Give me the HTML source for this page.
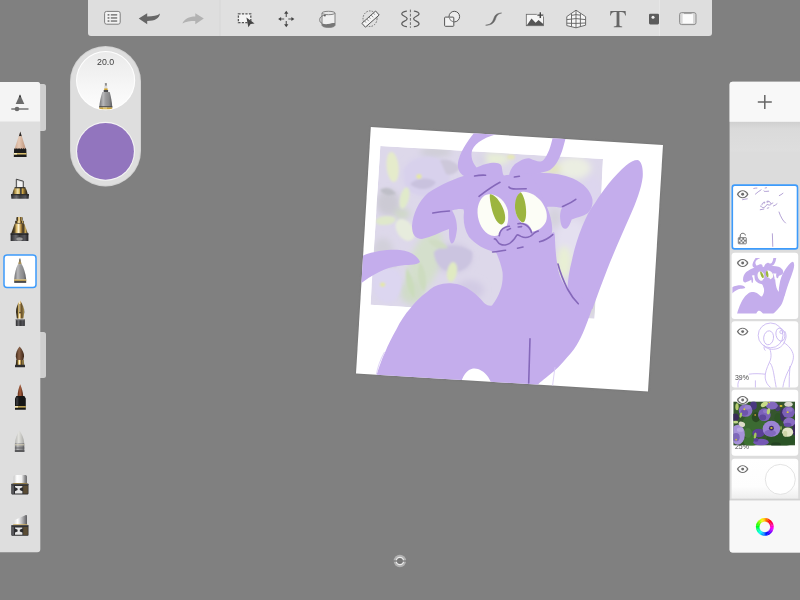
<!DOCTYPE html>
<html>
<head>
<meta charset="utf-8">
<title>Sketch</title>
<style>
html,body{margin:0;padding:0;width:800px;height:600px;overflow:hidden;background:#808080;font-family:"Liberation Sans",sans-serif;}
svg{position:absolute;left:0;top:0;display:block}
text{font-family:"Liberation Sans",sans-serif}
</style>
</head>
<body>
<svg width="800" height="600" viewBox="0 0 800 600">
<defs>
  <clipPath id="paperClip"><polygon points="370.8,127 663,145 648,391.5 356,373.5"/></clipPath>
  <clipPath id="photoClip"><polygon points="380.3,146.1 603,159 594.5,318.7 370.5,304.8"/></clipPath>
  <filter id="b3" x="-50%" y="-50%" width="200%" height="200%"><feGaussianBlur stdDeviation="3"/></filter>
  <filter id="b5" x="-50%" y="-50%" width="200%" height="200%"><feGaussianBlur stdDeviation="5"/></filter>
  <filter id="b2" x="-50%" y="-50%" width="200%" height="200%"><feGaussianBlur stdDeviation="1.3"/></filter>
  <filter id="b1" x="-20%" y="-20%" width="140%" height="140%"><feGaussianBlur stdDeviation="0.8"/></filter>
  <linearGradient id="gTopCircle" x1="0" y1="0" x2="0" y2="1"><stop offset="0" stop-color="#eaeaea"/><stop offset="0.6" stop-color="#f6f6f6"/><stop offset="1" stop-color="#fdfdfd"/></linearGradient>
  <linearGradient id="gHdrShadow" x1="0" y1="0" x2="0" y2="1"><stop offset="0" stop-color="#cfcfcf"/><stop offset="0.25" stop-color="#dadada"/><stop offset="1" stop-color="#dedede"/></linearGradient>

  <linearGradient id="gGold" x1="0" y1="0" x2="1" y2="0"><stop offset="0" stop-color="#2a2418"/><stop offset="0.18" stop-color="#4a3c20"/><stop offset="0.32" stop-color="#d8b868"/><stop offset="0.45" stop-color="#fff6d8"/><stop offset="0.58" stop-color="#b88c3c"/><stop offset="0.72" stop-color="#3c3224"/><stop offset="0.86" stop-color="#c8a858"/><stop offset="1" stop-color="#2a2418"/></linearGradient>
  <linearGradient id="gDark" x1="0" y1="0" x2="1" y2="0"><stop offset="0" stop-color="#2a2a2c"/><stop offset="0.3" stop-color="#6a6a6e"/><stop offset="0.5" stop-color="#3a3a3c"/><stop offset="0.8" stop-color="#55555a"/><stop offset="1" stop-color="#1e1e20"/></linearGradient>
  <linearGradient id="gSilver" x1="0" y1="0" x2="1" y2="0"><stop offset="0" stop-color="#6e6e70"/><stop offset="0.3" stop-color="#b8b8ba"/><stop offset="0.5" stop-color="#9a9a9c"/><stop offset="0.75" stop-color="#8a8a8c"/><stop offset="1" stop-color="#5c5c5e"/></linearGradient>
  <linearGradient id="gWood" x1="0" y1="0" x2="1" y2="0"><stop offset="0" stop-color="#c9a48c"/><stop offset="0.4" stop-color="#e6c9b4"/><stop offset="1" stop-color="#b88e76"/></linearGradient>
  <linearGradient id="gBristle" x1="0" y1="0" x2="1" y2="0"><stop offset="0" stop-color="#3e2818"/><stop offset="0.4" stop-color="#8a6248"/><stop offset="1" stop-color="#3a2416"/></linearGradient>
  <linearGradient id="gBristle2" x1="0" y1="0" x2="1" y2="0"><stop offset="0" stop-color="#5a2a16"/><stop offset="0.45" stop-color="#a86040"/><stop offset="1" stop-color="#4a2212"/></linearGradient>
  <linearGradient id="gSmudge" x1="0" y1="0" x2="1" y2="0"><stop offset="0" stop-color="#b4b4b0"/><stop offset="0.4" stop-color="#e2e2de"/><stop offset="1" stop-color="#a8a8a4"/></linearGradient>
  <linearGradient id="gEraser" x1="0" y1="0" x2="1" y2="0"><stop offset="0" stop-color="#c8c8c8"/><stop offset="0.25" stop-color="#ffffff"/><stop offset="0.6" stop-color="#f0f0f0"/><stop offset="0.85" stop-color="#8c8c8e"/><stop offset="1" stop-color="#6a6a6c"/></linearGradient>
  <linearGradient id="gEraser2" x1="0" y1="0" x2="1" y2="0"><stop offset="0" stop-color="#d8d8d8"/><stop offset="0.3" stop-color="#ffffff"/><stop offset="0.6" stop-color="#c0c0c2"/><stop offset="1" stop-color="#5a5a5e"/></linearGradient>
  <g id="eraserBase">
    <rect x="11.3" y="0" width="17.2" height="10.6" rx="0.8" fill="#2c2c2e"/>
    <rect x="11.3" y="0" width="17.2" height="1" fill="#4a4a4c"/>
    <rect x="23.2" y="1.8" width="4.6" height="8" fill="#5a4c34"/>
    <path d="M15,2.2 H22.4 V3.4 L19.8,4.6 V6.2 L22.4,7.4 V9.6 H15 V7.4 L17.6,6.2 V4.6 L15,3.4 Z" fill="#e6e6e6"/>
    <rect x="12" y="1.6" width="2" height="8.4" fill="#56565a"/>
  </g>
<g id="artFill">
    <g fill="#c4adec" stroke="none">
      <!-- tail -->
      <path d="M350,262 C366,252 385,249 400,250 C410,251 418,256 420,262 C416,266 408,264 398,266 C384,268 372,274 350,292 Z"/>
      <!-- left horn -->
      <path d="M478,128 C470,138 462,148 458.5,160 C456.5,168 459,174 466,177 L482,172 C476,168 471,162 471.5,153 C472.5,145 482,138 497,134 L498,126 Z"/>
      <!-- right horn -->
      <path d="M553,136 C551,146 548,155 543.5,160 C540,163 536,161 530,158.5 C526,157.5 521,160 515,164 C511,168 509.5,172 509,176 L525,176 C534,174.5 544,172.5 550,170 C556,166 560,158 563,148 L566,137 Z"/>
      <!-- head -->
      <path d="M466,176 C472,170 478,166 486,164 C493,162 500,162 501.5,166 C502.5,170 502.5,175 504,175.5 C515,174 535,173 551,174 C548,184 546,196 546.6,206 C550,214 553,224 552,232 C550,240 548,244 548,246 L495,252 C485,250 475,244 469,237 C464,229 463,220 464,212 C462,200 462,186 466,176 Z"/>
      <!-- left ear -->
      <path d="M470,174 C455,178 440,185 428,193 C418,202 413,214 412,226 C412,234 415,239 422,239 C432,237 440,232 449,229 C449,235 449,241 451.5,243.5 C454,244 456,238 457,229 C457,221 455,215 452,210.5 C458,208.5 462,208.5 466,210 L470,190 Z"/>
      <!-- right ear -->
      <path d="M530,173.5 C546,172 561,173.5 573,178.5 C584,183.5 591,191 592.5,199.6 C593,205 591.5,209 588,213 C583,216.5 577,217.5 571.7,219.4 C570,224 568.5,228 565.5,228.7 C561.5,229 560.3,223 560,216 C560.3,212 561,209.5 562,208 C557,207 552,206.5 546,207 L540,190 Z"/>
      <!-- raised arm -->
      <path d="M637.6,160 C641.5,161 643.3,168 642.7,177 C641.5,188 636,203 630,216 C623,232 614,252 607,270 C602,283 597,296 592.5,309 L575,310 C571,302 568,296 567.5,289 C567.8,279 569.5,270 572,260 C574,250 577.5,238 582,227 C586,217 590,209 595,203 C603,190 614,176 626,165.5 C630,162 634,160 637.6,160 Z"/>
      <!-- body -->
      <path d="M494,248 C498,256 501,264 502.5,272 C503.5,282 501,294 492,305.5 C487,306.5 484,303 480.6,299 C474,292 466,286 457,284 C451,283 447,283 443,283.8 C436,285 431,288 427,292 C420,297 415,302 410.6,308 C405,314 400,322 396.6,329 C392,337 388,345 385,352.6 C381,361 378,370 374,384 L462,392 L462,379.4 C464,375 466,372 469,370 C471,368.5 475,368 478,369 C483,371 488,374 492,385 L530,394 C537,384 542,381 548,376 C555,370.5 562,364 567,357.5 C572,352 576,347 579,341 C584,332 588,320 592.5,307.5 L580,296 C574,294 570,292 567.5,289 C563,284 560,278 558.5,271 C556.5,262 555.3,250 555,240 C555,237 555,234 554,232 L546,236 Z"/>
    </g>

    <!-- eyes -->
    <g>
      <path d="M488.5,194.2 C483,194.5 478.5,201 477.6,209 C476.8,219 481,229.5 488,234 C493,237 498.5,236.5 502.5,232 C507.5,227 509.5,219 508,211 C506,201 497,193.5 488.5,194.2 Z" fill="#fcfdf6"/>
      <path d="M490,194.3 C493,194 498,198 502,206 C506,214 506.5,222 502,224.5 C498.5,225 494.5,219 492.3,211 C490.3,203.5 489.3,196 490,194.3 Z" fill="#9cb53f"/>
      <path d="M521,192 C527,190.5 535,194 541,201 C546.5,208 548,216 546,221.5 C543.5,227 538,231 532,231.5 C526,228 519,222 516.2,214 C514,206 516,195 521,192 Z" fill="#fcfdf6"/>
      <path d="M520.8,192.3 C523.5,195 525.5,202 526,209 C526.5,216 525.5,222 523,222.5 C519,221.5 515.5,215 515,208 C514.6,201 517,194 520.8,192.3 Z" fill="#9cb53f"/>
    </g>
    <!-- nose bumps (purple over eye whites) -->
    <g fill="#c4adec">
      <path d="M499,237 C499.5,231 502.5,227 507.5,226.5 C512,226.3 515,230 516,236 L510,244 Z"/>
      <path d="M516.5,233 C517,227 519,223.5 523.5,223 C528,223 531,227 532.5,233 L522,240 Z"/>
      <path d="M506,196 C510,200 514,207 516,216 C517,222 517.5,226 517,230 L508,228 C509,218 508.5,208 506,196 Z"/>
    </g>
    </g>
<g id="artLines">
    <!-- dark line work -->
    <g fill="none" stroke="#8568ba" stroke-linecap="round" stroke-linejoin="round">
      <path d="M474.6,176 C478,175.3 482,175 485.6,175.2"/>
      <path d="M514.4,177 L519.4,176.2"/>
      <path d="M479,196.3 C486,191 493,186 500,182.3"/>
      <path d="M509,187 C510,188.8 513,189 516,189 L526.2,188.8"/>
      <path d="M432.8,213 C438,212 444,211.3 449.5,211"/>
      <path d="M562.5,206.5 C566,205 571,203 575.8,199.3"/>
      <path d="M499.25,235.6 C499.6,232 502,228.8 505.3,227.3 C506.8,226.7 508.2,226.3 509.4,226.3"/>
      <path d="M518,223.7 C520.5,223 523,223.4 525.5,224.8 C528.5,226.6 530.8,229.5 531.5,232.6"/>
      <path d="M494.4,239 C495.3,238.6 496.2,239.6 497,240.9 C498,242.6 499,243.6 500.5,244.2 C502,245 503.6,245.2 505.25,245 C507,244.7 509,244 510.5,242.75 C512,241.5 513.2,240.3 514.25,239 C515.2,237.8 515.8,236.4 516.5,235.6 C517,235 517.5,234.8 518,234.9 C519,235.2 520,235.9 521,236.4 C522.5,237.1 524,237.5 525.5,237.5 C527,237.5 528.6,237.1 530,236.4 C531.4,235.6 532.6,234.4 533.75,233.4 C535,232.4 536.5,231.7 538.25,231.1"/>
      <path d="M507.2,230 L510.4,228.6"/>
      <path d="M518.2,227 L521.6,226.6"/>
      <path d="M492.6,252 C497,251.6 501,250.8 505.6,250.2"/>
      <path d="M517.5,248.2 L523,247"/>
      <path d="M539.6,241.8 C544,240.6 549,238 552.8,234.6"/>
      <path d="M558,264 C560,272 563,280 567.5,289 C570.5,294.5 574,299.5 578.3,303.8"/>
      <path d="M530,338.7 L528.7,383"/>
    </g>
    </g>

  <g id="eye">
    <path d="M-5.8,0 C-3.4,-5.3 3.4,-5.3 5.8,0 C3.4,5.3 -3.4,5.3 -5.8,0 Z" fill="#6c6c6c"/>
    <path d="M-4.3,0 C-2.6,-3.7 2.6,-3.7 4.3,0 C2.6,3.7 -2.6,3.7 -4.3,0 Z" fill="#fbfbfb"/>
    <circle cx="0" cy="0" r="2.95" fill="#fbfbfb"/>
    <circle cx="0" cy="0" r="1.45" fill="#6c6c6c"/>
  </g>
  <clipPath id="thumbClip"><rect x="0" y="0" width="292.8" height="247"/></clipPath>
<linearGradient id="gL5" x1="0" y1="0" x2="0" y2="1"><stop offset="0" stop-color="#ffffff"/><stop offset="0.7" stop-color="#fdfdfd"/><stop offset="1" stop-color="#eeeeee"/></linearGradient>
<clipPath id="l1clip"><rect x="733" y="185.8" width="63.8" height="62.4"/></clipPath>
<filter id="bT" x="-30%" y="-30%" width="160%" height="160%"><feGaussianBlur stdDeviation="0.7"/></filter>
<linearGradient id="gGold2" x1="0" y1="0" x2="1" y2="0"><stop offset="0" stop-color="#1c1c1c"/><stop offset="0.18" stop-color="#b89848"/><stop offset="0.36" stop-color="#f4e6b0"/><stop offset="0.48" stop-color="#c8a850"/><stop offset="0.55" stop-color="#1e2638"/><stop offset="0.66" stop-color="#d0a848"/><stop offset="0.82" stop-color="#6a5428"/><stop offset="1" stop-color="#1a1a1a"/></linearGradient>
</defs>

<!-- ===== PAPER ===== -->
<g id="paper">
  <polygon points="370.8,127 663,145 648,391.5 356,373.5" fill="#6f6f6f" filter="url(#b1)"/>
  <polygon points="370.8,127 663,145 648,391.5 356,373.5" fill="#ffffff"/>
  <g id="photo" clip-path="url(#photoClip)">
    <polygon points="380.3,146.1 603,159 594.5,318.7 370.5,304.8" fill="#ddd8ea"/>
    <g filter="url(#b3)">
      <ellipse cx="388" cy="203" rx="12" ry="13" fill="#cccad4"/>
      <ellipse cx="383" cy="250" rx="10" ry="12" fill="#d2d0da"/>
      <ellipse cx="436" cy="152" rx="16" ry="5" fill="#cfced6"/>
      <ellipse cx="426" cy="176" rx="24" ry="20" fill="#d9d3ec"/>
      <ellipse cx="387" cy="284" rx="15" ry="18" fill="#dbd5ee"/>
      <ellipse cx="452" cy="258" rx="20" ry="14" fill="#cfc8e2"/>
      <ellipse cx="470" cy="290" rx="14" ry="10" fill="#d2cbe4"/>
      <ellipse cx="425" cy="262" rx="15" ry="34" fill="#d4dfcc" transform="rotate(20 425 262)"/>
      <ellipse cx="412" cy="292" rx="12" ry="12" fill="#d0dcc8"/>
      <ellipse cx="402" cy="214" rx="8" ry="6" fill="#cfd8c8"/>
      <ellipse cx="494" cy="159" rx="16" ry="6" fill="#e8efd6"/>
      <ellipse cx="482" cy="160" rx="5" ry="5" fill="#d8d3e6"/>
      <ellipse cx="574" cy="168" rx="17" ry="11" fill="#ebeee2"/>
      <ellipse cx="553" cy="169" rx="8" ry="5" fill="#e4e6bc"/>
      <ellipse cx="593" cy="190" rx="10" ry="14" fill="#ddd6ee"/>
      <ellipse cx="572" cy="240" rx="16" ry="20" fill="#e4e0f0"/>
      <ellipse cx="564" cy="262" rx="8" ry="16" fill="#e8efd4"/>
      <ellipse cx="588" cy="300" rx="8" ry="16" fill="#d6d8d2"/>
      <ellipse cx="555" cy="218" rx="6" ry="10" fill="#d4d2dc"/>
    </g>
    <g filter="url(#b2)">
      <path d="M404,170 C410,158 428,154 440,160 C450,166 452,180 446,190 C436,198 416,198 406,188 Z" fill="#d8d1ec"/>
      <path d="M410,184 C416,178 428,176 436,182 C432,190 418,192 410,184 Z" fill="#c9c2de"/>
      <path d="M440,160 C448,158 456,162 460,168 C456,174 450,176 446,174 Z" fill="#cdc8da"/>
      <path d="M374,272 C380,264 394,266 400,276 C404,288 398,300 388,303 C378,302 372,290 374,272 Z" fill="#dcd6f0"/>
      <path d="M376,262 C384,258 394,260 398,266 C390,268 382,268 376,262 Z" fill="#cac6d6"/>
      <path d="M434,252 C442,244 462,244 472,252 C474,262 466,272 452,272 C440,270 434,262 434,252 Z" fill="#cbc4e0"/>
      <ellipse cx="392.6" cy="167" rx="6" ry="15" fill="#e5ebcb" transform="rotate(-6 392.6 167)"/>
      <ellipse cx="404.5" cy="198" rx="4.5" ry="11" fill="#e0eaca" transform="rotate(14 404.5 198)"/>
      <ellipse cx="385.5" cy="220.5" rx="10" ry="4.5" fill="#dfe8cb" transform="rotate(-6 385.5 220.5)"/>
      <ellipse cx="405" cy="230" rx="8" ry="12" fill="#e7ecdd" transform="rotate(-35 405 230)"/>
      <ellipse cx="452" cy="272" rx="5" ry="10" fill="#e0eac2" transform="rotate(10 452 272)"/>
      <ellipse cx="511" cy="157" rx="4" ry="2.5" fill="#e6e8b8"/>
      <path d="M407,268 C412,276 416,288 414,298 C408,292 404,280 407,268 Z" fill="#cbdcbc"/>
      <path d="M420,262 C426,270 428,282 424,292 C418,284 416,272 420,262 Z" fill="#cddcc0"/>
      <path d="M428,240 C436,238 444,242 448,248 C440,250 432,248 428,240 Z" fill="#d0dcc4"/>
      <path d="M380,190 C386,186 392,188 396,194 C390,196 384,196 380,190 Z" fill="#bfbfc8"/>
    </g>
    <ellipse cx="419" cy="176.5" rx="2.6" ry="2.2" fill="#e6ea9c" filter="url(#b1)"/>
    <ellipse cx="382.6" cy="284.6" rx="2.6" ry="2.2" fill="#e4e8a4" filter="url(#b1)"/>
  </g>
  <g id="art" clip-path="url(#paperClip)">
    <use href="#artFill"/>
    <g stroke-width="1.6"><use href="#artLines"/></g>
    <!-- faint sketch lines -->
    <g fill="none" stroke="#d6c8f4" stroke-width="0.8">
      <path d="M384.5,352 C380,360 377.5,368 376.5,374"/>
      <path d="M555,367 L552.5,386"/>
    </g>
<!--ART3-->
  </g>
</g>

<!-- ===== TOP TOOLBAR ===== -->
<g id="toolbar">
  <path d="M88,0 H712 V33 a3,3 0 0 1 -3,3 H91 a3,3 0 0 1 -3,-3 Z" fill="#dedede"/>
  
  <rect x="220" y="0" width="439" height="36" fill="#e0e0e0"/>
  <rect x="219.5" y="0" width="1" height="36" fill="#d6d6d6"/>
  <rect x="659" y="0" width="1" height="36" fill="#e6e6e6"/>
  <!-- list -->
  <rect x="104.6" y="11.4" width="15.6" height="12.8" rx="2" fill="#f2f2f2" stroke="#7d7d7d" stroke-width="1"/>
  <g fill="#7a7a7a">
    <rect x="107.6" y="14" width="1.8" height="1.7"/><rect x="110.8" y="14.1" width="6.4" height="1.5"/>
    <rect x="107.6" y="17.1" width="1.8" height="1.7"/><rect x="110.8" y="17.2" width="6.4" height="1.5"/>
    <rect x="107.6" y="20.2" width="1.8" height="1.7"/><rect x="110.8" y="20.3" width="6.4" height="1.5"/>
  </g>
  <!-- undo / redo -->
  <path d="M138.7,18.6 L147.2,13.2 L147.2,16.4 C153,16.4 157.5,15.6 160,13.4 C159.3,18.2 155,20.9 147.2,20.9 L147.2,24.3 Z" fill="#666"/>
  <path d="M203.8,18.6 L195.3,13.2 L195.3,16.4 C189,16.4 184.5,18.6 182.4,23.4 C186,21.4 190,20.9 195.3,20.9 L195.3,24.3 Z" fill="#b2b2b2"/>
  <!-- select -->
  <rect x="238.4" y="13.9" width="12.4" height="8.8" fill="#f4f4f4" stroke="#555" stroke-width="1.3" stroke-dasharray="2.2,1.3"/>
  <path d="M246.4,17.4 L254.6,23.4 L250.6,24 L248.4,27.2 Z" fill="#444"/>
  <!-- move -->
  <g stroke="#555" stroke-width="1.1" fill="none">
    <path d="M286.25,12.5 V17 M286.25,21 V25.5 M279.8,19 H284.2 M288.3,19 H292.8"/>
  </g>
  <g fill="#444">
    <path d="M286.25,10.8 L288.4,13.8 H284.1 Z"/><path d="M286.25,27.2 L288.4,24.2 H284.1 Z"/>
    <path d="M278.1,19 L281.1,16.9 V21.1 Z"/><path d="M294.4,19 L291.4,16.9 V21.1 Z"/>
  </g>
  <!-- bucket -->
  <g>
    <path d="M322,13 V25 C322,26.6 325,27.4 328.5,27.4 C332,27.4 335,26.6 335,25 V13 Z" fill="#efefef" stroke="#777" stroke-width="0.9"/>
    <path d="M322,23.6 C324,24 326,24.4 328,24 C331,23.4 333,22.8 335,23 V25 C335,26.6 332,27.4 328.5,27.4 C325,27.4 322,26.6 322,25 Z" fill="#777"/>
    <ellipse cx="328.5" cy="13" rx="6.5" ry="1.7" fill="#e6e6e6" stroke="#777" stroke-width="0.9"/>
    <path d="M324.6,15.4 C321,15.6 319.4,18 319.8,20.6 C320,22.2 321,23 322,23.2" fill="none" stroke="#666" stroke-width="0.9"/>
    <circle cx="324.9" cy="15.6" r="0.9" fill="#555"/>
  </g>
  <!-- ruler -->
  <g>
    <ellipse cx="370" cy="18.7" rx="7" ry="7.8" fill="none" stroke="#666" stroke-width="0.9" stroke-dasharray="1.6,1.2"/>
    <path d="M361.9,23.3 L375.6,11 L379.2,15 L365.4,27.2 Z" fill="#f4f4f4" stroke="#555" stroke-width="1" stroke-linejoin="round"/>
    <path d="M364.6,21 L366,22.6 M366.8,19 L368.8,21.2 M369,17.1 L370.4,18.7 M371.2,15.1 L373.2,17.3 M373.4,13.1 L374.8,14.7" stroke="#666" stroke-width="0.7" fill="none"/>
  </g>
  <!-- symmetry -->
  <g fill="none" stroke="#5e5e5e">
    <path d="M410.4,9.6 V27.8" stroke-width="0.9" stroke-dasharray="2.7,1.5"/>
    <path d="M406.4,11.2 C403.5,11.6 401.5,12.6 401.8,14.2 C402.2,16.2 407,16.4 407.2,18.7 C407,21 402.2,21.2 401.8,23.4 C401.5,25 403.5,26.2 406.4,26.6" stroke-width="1.3" stroke-linecap="round"/>
    <path d="M414.4,11.2 C417.3,11.6 419.3,12.6 419,14.2 C418.6,16.2 413.8,16.4 413.6,18.7 C413.8,21 418.6,21.2 419,23.4 C419.3,25 417.3,26.2 414.4,26.6" stroke-width="1.3" stroke-linecap="round"/>
  </g>
  <!-- shapes -->
  <g stroke="#555" stroke-width="1">
    <circle cx="454.3" cy="16.6" r="5.3" fill="#ececec"/>
    <rect x="444.6" y="17.1" width="9.2" height="9.2" rx="0.8" fill="#f2f2f2"/>
    <path d="M449.2,17.6 A5.3,5.3 0 0 0 453.3,21.8" fill="none" stroke-width="0.7"/>
  </g>
  <!-- curve -->
  <path d="M485.6,25.2 C492,24.6 493,20.5 494,18 C495,15.2 496.5,13.2 501.6,13 C497.6,14 496.6,16 495.6,18.8 C494.4,22 492.6,25.4 485.6,25.2 Z" fill="#666" stroke="#666" stroke-width="0.5" stroke-linejoin="round"/>
  <!-- image + -->
  <g>
    <rect x="526.3" y="14.3" width="17.2" height="11.4" fill="#f6f6f6" stroke="#666" stroke-width="0.8"/>
    <path d="M526.7,25.4 L531.5,18.6 L535.6,22.8 L538.6,20 L543.2,24 V25.4 Z" fill="#555"/>
    <rect x="536" y="11" width="9" height="9" fill="#e0e0e0" opacity="0.0"/>
    <path d="M540.3,11.6 V18.6 M536.8,15.1 H543.8" stroke="#e8e8e8" stroke-width="3" fill="none"/>
    <path d="M540.3,12.2 V18 M537.4,15.1 H543.2" stroke="#444" stroke-width="1.4" fill="none"/>
  </g>
  <!-- perspective grid -->
  <g fill="#f6f6f6" stroke="#666" stroke-width="0.95" stroke-linejoin="round">
    <path d="M576,10.2 L585.6,16.6 V25.2 L576,27.8 L566.8,25.6 V16.6 Z"/>
    <path d="M576,10.2 V27.8 M571.5,13.4 V26.8 M580.4,13.2 V26.6 M566.8,19.6 L576,18.6 L585.6,19.6 M566.8,23.2 L576,23.4 L585.6,23 M571.5,15.4 L576,14.6 L580.4,15.2" fill="none"/>
  </g>
  <!-- T -->
  <path d="M610.4,10.9 H625.6 L625.9,15.5 H625.2 C624.8,13 623.6,12 621,12 H619.4 V24.6 C619.4,26 620,26.5 622.2,26.6 V27.3 H613.8 V26.6 C616,26.5 616.6,26 616.6,24.6 V12 H615 C612.4,12 611.2,13 610.8,15.5 H610.1 Z" fill="#666"/>
  <!-- small dark tag -->
  <rect x="649" y="13.8" width="10" height="10.6" rx="1.3" fill="#5c5c5c"/>
  <circle cx="653" cy="17.2" r="1.5" fill="#f0f0f0"/>
  <!-- full screen -->
  <rect x="679.6" y="12.6" width="16.4" height="12" rx="2" fill="#d8d8d8" stroke="#858585" stroke-width="0.9"/>
  <rect x="682.6" y="14.2" width="10.4" height="9.2" fill="#fbfbfb"/>
  <rect x="684" y="13.2" width="7.6" height="0.8" fill="#9a9a9a"/>

</g>

<!-- ===== LEFT PANEL ===== -->
<g id="leftpanel">
  
  <rect x="40" y="84" width="6" height="47" rx="2.5" fill="#cfcfcf"/>
  <rect x="37" y="84" width="6" height="47" fill="#cfcfcf"/>
  <rect x="40" y="332" width="6" height="46" rx="2.5" fill="#cfcfcf"/>
  <rect x="37" y="332" width="6" height="46" fill="#cfcfcf"/>
  <path d="M0,82 H37.3 a3,3 0 0 1 3,3 V549.3 a3,3 0 0 1 -3,3 H0 Z" fill="#dedede"/>
  <path d="M0,82 H37 a3,3 0 0 1 3,3 V121.5 H0 Z" fill="#f4f4f4"/>
  <!-- brush-size icon -->
  <path d="M20,94.6 L24.3,104 H15.7 Z" fill="#6b6b6b"/>
  <path d="M20,94.6 L21.2,97.2 H18.8 Z" fill="#333"/>
  <rect x="11.3" y="108.3" width="17.2" height="1.4" fill="#6b6b6b"/>
  <circle cx="17" cy="109" r="2.3" fill="#6b6b6b"/>
  <!-- selected brush box -->
  <rect x="4" y="255" width="32" height="32.5" rx="3" fill="#ffffff" stroke="#3d9bfb" stroke-width="1.5"/>
  
  <!-- pencil -->
  <g>
    <path d="M20.3,131.6 L26.2,150 H14.2 Z" fill="url(#gWood)"/>
    <path d="M20.3,131.4 L21.8,136.4 C21,135.8 19.6,135.8 18.8,136.4 Z" fill="#2a2a2a"/>
    <path d="M14.1,149.2 C14.6,148 15.4,148 15.9,149.2 C16.4,148 17.4,148 17.9,149.2 C18.4,147.8 19.6,147.8 20.2,149.2 C20.8,147.8 22,147.8 22.5,149.2 C23,148 24,148 24.5,149.2 C25,148 25.8,148 26.3,149.2 L26.6,157 H13.8 Z" fill="#1c1c1c"/>
    <rect x="13.9" y="153" width="12.6" height="1.5" fill="#d9bf6e"/>
    <rect x="13.9" y="153" width="3" height="1.5" fill="#f6ecc0"/>
  </g>
  <!-- chisel marker / airbrush -->
  <g>
    <path d="M16.3,179.2 L23.3,181.2 V188 H16.3 Z" fill="#d8d8d8" stroke="#333" stroke-width="0.9" stroke-linejoin="round"/>
    <path d="M17.4,181 L22.2,182.2 V187 H17.4 Z" fill="#f2f2f2"/>
    <path d="M15,187.4 H25 C26.6,189.4 27.4,192 27.6,194.4 H12.4 C12.6,192 13.4,189.4 15,187.4 Z" fill="url(#gGold2)"/><rect x="14.6" y="187.2" width="10.8" height="1.1" fill="#2a2a2a"/>
    <path d="M11,194.2 H29 L28.6,198.8 H11.4 Z" fill="url(#gDark)"/>
    <rect x="11" y="194.2" width="18" height="1" fill="#222"/>
  </g>
  <!-- felt marker -->
  <g>
    <rect x="16.4" y="217" width="6.2" height="4" rx="0.8" fill="url(#gGold)"/>
    <rect x="15.2" y="220.8" width="8.6" height="2.6" fill="url(#gGold)"/>
    <rect x="15.2" y="223.2" width="8.6" height="0.7" fill="#3a2c14"/>
    <path d="M14.6,223.8 H24.4 L27.8,233.6 H11.2 Z" fill="url(#gGold)"/>
    <path d="M10.6,233.4 H28.4 V241 H10.6 Z" fill="url(#gDark)"/>
    <rect x="10.6" y="233.4" width="17.8" height="1.2" fill="#1c1c1c"/>
    <ellipse cx="19.5" cy="239" rx="3.2" ry="1.8" fill="#9a9a9a"/>
  </g>
  <!-- ballpoint (selected) -->
  <g>
    <path d="M19.3,260 H20.5 L21.6,264.4 H18.2 Z" fill="#8a7a58"/><rect x="18.6" y="262.6" width="2.6" height="0.9" fill="#c8a858"/>
    <rect x="19.3" y="258.6" width="1.2" height="2" fill="#555"/>
    <path d="M18,264.2 H21.8 C23.8,268 25.6,273 26.2,279.6 H14.2 C14.6,273 16,268 18,264.2 Z" fill="url(#gSilver)"/>
    <rect x="14" y="279.4" width="12.4" height="1.6" fill="#c8a858"/>
    <rect x="14.2" y="280.9" width="12" height="2" fill="#4a4a4c"/>
  </g>
  <!-- fountain pen -->
  <g>
    <path d="M20,300.4 C22.6,304 24.4,308 24.3,312 L23.4,318.4 H16.8 L16,312 C15.9,308 17.4,304 20,300.4 Z" fill="url(#gGold)"/>
    <path d="M20,304 V312.6" stroke="#3a2c14" stroke-width="0.7"/>
    <circle cx="20" cy="312.8" r="0.8" fill="#2a2010"/>
    <rect x="15.8" y="319" width="9" height="7" rx="0.6" fill="url(#gDark)"/>
    <rect x="15.8" y="319" width="9" height="1.2" fill="#8a8a8c"/>
  </g>
  <!-- round brush -->
  <g>
    <path d="M19.6,346.6 C22.6,350 24.4,353.6 24,356.6 L23.2,360.4 H16.6 L15.8,356.6 C15.6,353.6 16.8,350 19.6,346.6 Z" fill="url(#gBristle)"/>
    <path d="M16.2,360 H23.8 L24.2,365.2 H15.8 Z" fill="url(#gGold)"/>
    <rect x="15" y="364.8" width="10" height="2.4" rx="0.5" fill="#2c2c2e"/>
  </g>
  <!-- pointed brush -->
  <g>
    <path d="M20.2,384.2 C21.8,388 23,392 23.2,396.4 H17.6 C17.6,392 18.6,388 20.2,384.2 Z" fill="url(#gBristle2)"/>
    <path d="M16.4,396 H24.4 L25.8,398.6 V409.8 H15 V398.6 Z" fill="#161616"/>
    <rect x="16" y="397.4" width="2.4" height="8" fill="#3c3c40" opacity="0.8"/>
    <rect x="15" y="406.2" width="10.8" height="1.3" fill="#e0c060"/>
    <rect x="15" y="406.2" width="3" height="1.3" fill="#fff0c0"/>
  </g>
  <!-- smudge -->
  <g>
    <path d="M19.5,430.4 C22,434 24,438.6 24.3,443.4 H14.9 C15.2,438.6 17,434 19.5,430.4 Z" fill="url(#gSmudge)"/>
    <rect x="14.9" y="443.2" width="9.4" height="8.8" rx="0.6" fill="url(#gSilver)"/>
    <rect x="14.9" y="444.4" width="9.4" height="0.9" fill="#e8e0c4"/>
    <rect x="14.9" y="447.6" width="9.4" height="0.8" fill="#58585a"/>
    <rect x="14.9" y="450" width="9.4" height="2" fill="#5a5a5c"/>
  </g>
  <!-- eraser 1 -->
  <g>
    <path d="M13.6,476.8 C13.6,475.6 14.4,475.1 15.6,475.1 H25 C26.2,475.1 27,475.6 27,476.8 V483.2 H13.6 Z" fill="url(#gEraser)"/>
    <rect x="13.2" y="483" width="14.2" height="0.9" fill="#c8a040"/>
    <use href="#eraserBase" y="483.8"/>
  </g>
  <!-- eraser 2 (chisel) -->
  <g>
    <path d="M13.6,520.6 L25.4,515.2 C26.4,514.9 27,515.4 27,516.4 V524.6 H13.6 Z" fill="url(#gEraser2)"/>
    <rect x="13.2" y="524.4" width="14.2" height="0.9" fill="#c8a040"/>
    <use href="#eraserBase" y="525.2"/>
  </g>


</g>

<!-- ===== BRUSH PUCK ===== -->
<g id="puck">
  
  <rect x="70" y="46" width="71" height="140.5" rx="35.5" fill="#d2d2d2"/>
  <rect x="71" y="47" width="69" height="138.5" rx="34.5" fill="#dedede"/>
  <circle cx="105.6" cy="80.6" r="29.6" fill="#ffffff"/>
  <circle cx="105.6" cy="80.6" r="28.6" fill="url(#gTopCircle)"/>
  <circle cx="105.5" cy="151.3" r="29.5" fill="#f4f4f4"/>
  <circle cx="105.5" cy="151.3" r="28.4" fill="#9275be"/>
  <text opacity="0.99" x="105.6" y="65" font-size="8.8" text-anchor="middle" fill="#3c3c3c">20.0</text>
  
  <g>
    <rect x="104.9" y="83" width="2" height="5" rx="0.6" fill="#8c8c8c"/>
    <rect x="104.6" y="85.6" width="2.6" height="2.8" fill="#d8d8d8"/>
    <rect x="104.2" y="88.4" width="3.4" height="1.7" fill="#c8a030"/>
    <rect x="103.7" y="90" width="4.4" height="2.2" fill="#4c4c4e"/>
    <path d="M102.3,92 H109.7 C111,97 112,102 112.3,107.4 H99.2 C99.6,102 100.8,97 102.3,92 Z" fill="url(#gSilver)"/>
    <rect x="99.2" y="106.2" width="13.1" height="1.2" fill="#4a4a4c"/>
    <path d="M99.2,107.4 H112.3 L112.2,108.7 C108,109.5 103.4,109.5 99.3,108.7 Z" fill="#c9a23a"/>
    <rect x="103" y="107.6" width="4" height="0.9" fill="#f2e2a0"/>
  </g>


</g>

<!-- ===== RIGHT PANEL ===== -->
<g id="rightpanel">
  
  <path d="M732.6,81.8 H800 V552.4 H732.6 a3,3 0 0 1 -3,-3 V84.8 a3,3 0 0 1 3,-3 Z" fill="#dcdcdc"/>
  <rect x="730" y="121.5" width="70" height="30" fill="url(#gHdrShadow)"/>
  <path d="M732.6,81.8 H800 V121.8 H729.6 V84.8 a3,3 0 0 1 3,-3 Z" fill="#f8f8f8"/>
  <path d="M757.8,102 H771.8 M764.8,95 V109" stroke="#666" stroke-width="1.5" fill="none"/>
  
  <!-- layer 1 (selected) -->
  <rect x="732.3" y="185.1" width="65.2" height="63.8" rx="2.4" fill="#ffffff" stroke="#3d9bfb" stroke-width="1.6"/>
  <g clip-path="url(#l1clip)"><g transform="translate(723.4,176.3) scale(0.285)"><g transform="rotate(-3.5) translate(-370.8,-127)"><g stroke-width="2.1"><use href="#artLines"/></g></g></g></g>
  <use href="#eye" x="742.65" y="194.2"/>
  <!-- lock -->
  <g>
    <path d="M740.2,237.8 V236 C740.2,234 741.3,233.3 742.8,233.3 C744.3,233.3 745.2,234 745.4,235.4" fill="none" stroke="#666" stroke-width="1"/>
    <rect x="738.3" y="237.6" width="8" height="6.2" rx="0.6" fill="#f4f4f4" stroke="#666" stroke-width="0.8"/>
    <g fill="#777">
      <rect x="738.7" y="238" width="1.8" height="1.8"/><rect x="742.3" y="238" width="1.8" height="1.8"/>
      <rect x="740.5" y="239.8" width="1.8" height="1.8"/><rect x="744.1" y="239.8" width="1.8" height="1.8"/>
      <rect x="738.7" y="241.6" width="1.8" height="1.8"/><rect x="742.3" y="241.6" width="1.8" height="1.8"/>
    </g>
  </g>
  <!-- layer 2 -->
  <rect x="731.6" y="252.8" width="66.6" height="66.2" rx="3" fill="#ffffff"/>
  <g transform="translate(732.4,258) scale(0.225)"><g clip-path="url(#thumbClip)"><g transform="rotate(-3.5) translate(-370.8,-127)"><use href="#artFill"/></g></g></g>
  <use href="#eye" x="742.65" y="263"/>
  <!-- layer 3 -->
  <rect x="731.6" y="321.3" width="66.6" height="66.3" rx="3" fill="#ffffff"/>
  <g fill="none" stroke="#c4b0f0" stroke-width="0.8">
    <circle cx="770.6" cy="335.4" r="12.4"/>
    <ellipse cx="768.6" cy="337.8" rx="4.9" ry="7" transform="rotate(8 768.6 337.8)"/>
    <ellipse cx="780.4" cy="334.6" rx="4.4" ry="6.6" transform="rotate(-12 780.4 334.6)"/>
    <circle cx="781.4" cy="332" r="1.6"/>
    <path d="M763.6,345 C766,349 772,350.4 778,348.4 C781.6,346.8 784,344 785,340.6 C786.6,337.6 786.4,333.6 784.6,331"/>
    <path d="M764,346.6 C764,348.6 764.6,350 765.4,350.6 M769.8,348.8 C771.4,353.4 771.6,358 769.4,362.4 C766.8,368 764.8,373 765.2,378 C765.8,382 767.6,385.4 770.6,387.4"/>
    <path d="M783.6,342.4 C788.6,345.6 792.6,350 793.4,355.6 C793.8,361.4 790.4,366.6 788,371.4 C785.6,376.4 783.6,382 782.8,387.4"/>
    <path d="M769.4,362.4 C771.6,364 773,369 774,375 C774.8,380 775.6,384 776.2,387.4 M790,366 C789.4,373 789,380 789.2,387.4"/>
    <path d="M748.8,374.2 C754,373.4 760,373.6 765.4,374.2 M738,387.4 C737.4,383 738.6,380 741,378.6 M755.4,380.4 V387.4"/>
  </g>
  <use href="#eye" x="742.65" y="331.6"/>
  <text opacity="0.99" x="734.9" y="380" font-size="7.7" fill="#4a4a4a" textLength="14" lengthAdjust="spacingAndGlyphs">39%</text>
  <!-- layer 4 -->
  <rect x="731.6" y="389.8" width="66.6" height="66" rx="3" fill="#ffffff"/>
  <text opacity="0.99" x="734.9" y="448.6" font-size="7.7" fill="#4a4a4a" textLength="14" lengthAdjust="spacingAndGlyphs">25%</text>
  <clipPath id="flClip"><rect x="733.3" y="401.5" width="61.7" height="44"/></clipPath>
  <g clip-path="url(#flClip)"><rect x="733.2" y="401.4" width="61.8" height="44.2" fill="#35562e"/><g filter="url(#bT)"><ellipse cx="754.33" cy="425.50" rx="12.50" ry="11.67" fill="#3a6a30"/><ellipse cx="781.00" cy="439.67" rx="15.00" ry="6.67" fill="#2c5226"/><ellipse cx="751.00" cy="441.33" rx="7.50" ry="5.00" fill="#3e7232"/><ellipse cx="756.00" cy="417.17" rx="4.17" ry="5.00" fill="#2a4a24"/><ellipse cx="777.67" cy="418.83" rx="3.33" ry="5.83" fill="#2e5428"/><ellipse cx="747.67" cy="433.00" rx="4.17" ry="5.00" fill="#44783a"/><ellipse cx="776.00" cy="444.67" rx="5.00" ry="2.50" fill="#244220"/><ellipse cx="735.17" cy="417.17" rx="3.75" ry="3.75" fill="#382a58"/><ellipse cx="753.50" cy="405.50" rx="3.33" ry="4.17" fill="#4a3880"/><ellipse cx="782.67" cy="414.67" rx="2.50" ry="6.67" fill="#3c2e62"/><ellipse cx="794.33" cy="429.67" rx="2.08" ry="5.83" fill="#3a2c5a"/><ellipse cx="758.50" cy="433.00" rx="6.25" ry="4.33" fill="#5a4096"/><ellipse cx="777.67" cy="408.00" rx="2.50" ry="3.33" fill="#4a3a7a"/><ellipse cx="745.58" cy="410.50" rx="6.83" ry="6.33" fill="#896fc4"/><ellipse cx="744.33" cy="412.58" rx="3.75" ry="3.17" fill="#6e54ac"/><ellipse cx="747.67" cy="407.17" rx="3.33" ry="2.08" fill="#9a82d0"/><ellipse cx="764.33" cy="414.67" rx="6.33" ry="6.33" fill="#7c62ba"/><ellipse cx="762.67" cy="417.58" rx="3.50" ry="3.00" fill="#5e469c"/><ellipse cx="766.00" cy="411.33" rx="3.00" ry="2.00" fill="#8e76c8"/><ellipse cx="771.83" cy="405.50" rx="6.00" ry="4.00" fill="#8268be"/><ellipse cx="788.50" cy="412.17" rx="6.33" ry="5.83" fill="#7a5eb6"/><ellipse cx="789.33" cy="409.67" rx="3.33" ry="2.17" fill="#8e74c6"/><ellipse cx="789.33" cy="422.17" rx="6.00" ry="4.33" fill="#8a6cc4"/><ellipse cx="787.67" cy="424.67" rx="3.83" ry="2.00" fill="#6a4eaa"/><ellipse cx="771.42" cy="428.83" rx="8.83" ry="8.00" fill="#9c84d4"/><ellipse cx="770.17" cy="433.00" rx="5.83" ry="3.17" fill="#8268c0"/><ellipse cx="771.42" cy="428.17" rx="2.50" ry="2.33" fill="#3e2c68"/><ellipse cx="737.67" cy="434.67" rx="7.17" ry="10.00" fill="#a692d8"/><ellipse cx="736.00" cy="437.17" rx="3.67" ry="4.17" fill="#7e68ba"/><ellipse cx="740.17" cy="429.67" rx="3.33" ry="2.17" fill="#b8a8e2"/><ellipse cx="761.00" cy="442.17" rx="7.67" ry="3.33" fill="#7458b4"/><ellipse cx="756.00" cy="439.67" rx="2.50" ry="2.00" fill="#5a4096"/><ellipse cx="737.00" cy="406.75" rx="1.67" ry="3.50" fill="#b6ce6e"/><ellipse cx="764.33" cy="404.25" rx="3.83" ry="2.25" fill="#c8dc88" transform="rotate(-30 764.33 404.25)"/><ellipse cx="768.50" cy="411.33" rx="1.67" ry="3.17" fill="#bcd478" transform="rotate(8 768.50 411.33)"/><ellipse cx="740.83" cy="415.08" rx="1.25" ry="2.67" fill="#a8cc64" transform="rotate(12 740.83 415.08)"/><ellipse cx="735.58" cy="422.17" rx="2.67" ry="1.33" fill="#c0d888"/><ellipse cx="741.83" cy="424.25" rx="3.33" ry="2.50" fill="#dcdcc8" transform="rotate(25 741.83 424.25)"/><ellipse cx="755.17" cy="435.50" rx="1.33" ry="3.00" fill="#a4c85c" transform="rotate(10 755.17 435.50)"/><ellipse cx="787.67" cy="432.17" rx="5.50" ry="4.67" fill="#e4e6c8"/><ellipse cx="785.17" cy="433.83" rx="2.17" ry="3.00" fill="#cdd4a8"/><ellipse cx="788.50" cy="404.25" rx="4.17" ry="2.50" fill="#d8d8cc"/><ellipse cx="781.00" cy="428.00" rx="0.83" ry="2.08" fill="#98bc5c"/><ellipse cx="744.33" cy="409.25" rx="1.00" ry="0.92" fill="#d8c83c"/><ellipse cx="771.42" cy="428.00" rx="1.17" ry="1.08" fill="#d2c22e"/><ellipse cx="781.00" cy="405.92" rx="1.50" ry="1.00" fill="#e0c838"/><ellipse cx="769.33" cy="402.58" rx="0.83" ry="0.75" fill="#d8c040"/><ellipse cx="787.67" cy="412.17" rx="1.08" ry="0.92" fill="#d8c83c"/><ellipse cx="736.17" cy="439.67" rx="0.92" ry="0.92" fill="#c8c040"/><ellipse cx="755.17" cy="415.08" rx="0.83" ry="1.00" fill="#c89838"/></g></g>
  <ellipse cx="742.65" cy="400" rx="6.6" ry="4.6" fill="#ffffff" opacity="0.85"/>
  <use href="#eye" x="742.65" y="400"/>
  <!-- layer 5 -->
  <path d="M731.6,498.8 V461.8 a3,3 0 0 1 3,-3 H795.2 a3,3 0 0 1 3,3 V498.8 Z" fill="url(#gL5)"/>
  <circle cx="780.3" cy="479.4" r="15" fill="#ffffff" stroke="#dcdcdc" stroke-width="0.8"/>
  <use href="#eye" x="742.65" y="469.1"/>

  <rect x="730" y="498.8" width="70" height="1.8" fill="#d2d2d2"/>
  <path d="M729.6,500.4 H800 V552.4 H732.6 a3,3 0 0 1 -3,-3 Z" fill="#f8f8f8"/>
  <g><path d="M764.71,518.00 A8.9,8.9 0 0 1 766.43,518.15 L765.77,521.69 A5.3,5.3 0 0 0 764.75,521.60 Z" fill="hsl(35,100%,50%)"/><path d="M766.26,518.12 A8.9,8.9 0 0 1 767.93,518.57 L766.66,521.94 A5.3,5.3 0 0 0 765.67,521.67 Z" fill="hsl(25,100%,50%)"/><path d="M767.76,518.51 A8.9,8.9 0 0 1 769.33,519.24 L767.50,522.34 A5.3,5.3 0 0 0 766.56,521.90 Z" fill="hsl(15,100%,50%)"/><path d="M769.17,519.15 A8.9,8.9 0 0 1 770.59,520.14 L768.25,522.87 A5.3,5.3 0 0 0 767.40,522.28 Z" fill="hsl(5,100%,50%)"/><path d="M770.45,520.03 A8.9,8.9 0 0 1 771.67,521.25 L768.89,523.53 A5.3,5.3 0 0 0 768.17,522.81 Z" fill="hsl(355,100%,50%)"/><path d="M771.56,521.11 A8.9,8.9 0 0 1 772.55,522.53 L769.42,524.30 A5.3,5.3 0 0 0 768.83,523.45 Z" fill="hsl(345,100%,50%)"/><path d="M772.46,522.37 A8.9,8.9 0 0 1 773.19,523.94 L769.80,525.14 A5.3,5.3 0 0 0 769.36,524.20 Z" fill="hsl(335,100%,50%)"/><path d="M773.13,523.77 A8.9,8.9 0 0 1 773.58,525.44 L770.03,526.03 A5.3,5.3 0 0 0 769.76,525.04 Z" fill="hsl(325,100%,50%)"/><path d="M773.55,525.27 A8.9,8.9 0 0 1 773.70,526.99 L770.10,526.95 A5.3,5.3 0 0 0 770.01,525.93 Z" fill="hsl(315,100%,50%)"/><path d="M773.70,526.81 A8.9,8.9 0 0 1 773.55,528.53 L770.01,527.87 A5.3,5.3 0 0 0 770.10,526.85 Z" fill="hsl(305,100%,50%)"/><path d="M773.58,528.36 A8.9,8.9 0 0 1 773.13,530.03 L769.76,528.76 A5.3,5.3 0 0 0 770.03,527.77 Z" fill="hsl(295,100%,50%)"/><path d="M773.19,529.86 A8.9,8.9 0 0 1 772.46,531.43 L769.36,529.60 A5.3,5.3 0 0 0 769.80,528.66 Z" fill="hsl(285,100%,50%)"/><path d="M772.55,531.27 A8.9,8.9 0 0 1 771.56,532.69 L768.83,530.35 A5.3,5.3 0 0 0 769.42,529.50 Z" fill="hsl(275,100%,50%)"/><path d="M771.67,532.55 A8.9,8.9 0 0 1 770.45,533.77 L768.17,530.99 A5.3,5.3 0 0 0 768.89,530.27 Z" fill="hsl(265,100%,50%)"/><path d="M770.59,533.66 A8.9,8.9 0 0 1 769.17,534.65 L767.40,531.52 A5.3,5.3 0 0 0 768.25,530.93 Z" fill="hsl(255,100%,50%)"/><path d="M769.33,534.56 A8.9,8.9 0 0 1 767.76,535.29 L766.56,531.90 A5.3,5.3 0 0 0 767.50,531.46 Z" fill="hsl(245,100%,50%)"/><path d="M767.93,535.23 A8.9,8.9 0 0 1 766.26,535.68 L765.67,532.13 A5.3,5.3 0 0 0 766.66,531.86 Z" fill="hsl(235,100%,50%)"/><path d="M766.43,535.65 A8.9,8.9 0 0 1 764.71,535.80 L764.75,532.20 A5.3,5.3 0 0 0 765.77,532.11 Z" fill="hsl(225,100%,50%)"/><path d="M764.89,535.80 A8.9,8.9 0 0 1 763.17,535.65 L763.83,532.11 A5.3,5.3 0 0 0 764.85,532.20 Z" fill="hsl(215,100%,50%)"/><path d="M763.34,535.68 A8.9,8.9 0 0 1 761.67,535.23 L762.94,531.86 A5.3,5.3 0 0 0 763.93,532.13 Z" fill="hsl(205,100%,50%)"/><path d="M761.84,535.29 A8.9,8.9 0 0 1 760.27,534.56 L762.10,531.46 A5.3,5.3 0 0 0 763.04,531.90 Z" fill="hsl(195,100%,50%)"/><path d="M760.43,534.65 A8.9,8.9 0 0 1 759.01,533.66 L761.35,530.93 A5.3,5.3 0 0 0 762.20,531.52 Z" fill="hsl(185,100%,50%)"/><path d="M759.15,533.77 A8.9,8.9 0 0 1 757.93,532.55 L760.71,530.27 A5.3,5.3 0 0 0 761.43,530.99 Z" fill="hsl(175,100%,50%)"/><path d="M758.04,532.69 A8.9,8.9 0 0 1 757.05,531.27 L760.18,529.50 A5.3,5.3 0 0 0 760.77,530.35 Z" fill="hsl(165,100%,50%)"/><path d="M757.14,531.43 A8.9,8.9 0 0 1 756.41,529.86 L759.80,528.66 A5.3,5.3 0 0 0 760.24,529.60 Z" fill="hsl(155,100%,50%)"/><path d="M756.47,530.03 A8.9,8.9 0 0 1 756.02,528.36 L759.57,527.77 A5.3,5.3 0 0 0 759.84,528.76 Z" fill="hsl(145,100%,50%)"/><path d="M756.05,528.53 A8.9,8.9 0 0 1 755.90,526.81 L759.50,526.85 A5.3,5.3 0 0 0 759.59,527.87 Z" fill="hsl(135,100%,50%)"/><path d="M755.90,526.99 A8.9,8.9 0 0 1 756.05,525.27 L759.59,525.93 A5.3,5.3 0 0 0 759.50,526.95 Z" fill="hsl(125,100%,50%)"/><path d="M756.02,525.44 A8.9,8.9 0 0 1 756.47,523.77 L759.84,525.04 A5.3,5.3 0 0 0 759.57,526.03 Z" fill="hsl(115,100%,50%)"/><path d="M756.41,523.94 A8.9,8.9 0 0 1 757.14,522.37 L760.24,524.20 A5.3,5.3 0 0 0 759.80,525.14 Z" fill="hsl(105,100%,50%)"/><path d="M757.05,522.53 A8.9,8.9 0 0 1 758.04,521.11 L760.77,523.45 A5.3,5.3 0 0 0 760.18,524.30 Z" fill="hsl(95,100%,50%)"/><path d="M757.93,521.25 A8.9,8.9 0 0 1 759.15,520.03 L761.43,522.81 A5.3,5.3 0 0 0 760.71,523.53 Z" fill="hsl(85,100%,50%)"/><path d="M759.01,520.14 A8.9,8.9 0 0 1 760.43,519.15 L762.20,522.28 A5.3,5.3 0 0 0 761.35,522.87 Z" fill="hsl(75,100%,50%)"/><path d="M760.27,519.24 A8.9,8.9 0 0 1 761.84,518.51 L763.04,521.90 A5.3,5.3 0 0 0 762.10,522.34 Z" fill="hsl(65,100%,50%)"/><path d="M761.67,518.57 A8.9,8.9 0 0 1 763.34,518.12 L763.93,521.67 A5.3,5.3 0 0 0 762.94,521.94 Z" fill="hsl(55,100%,50%)"/><path d="M763.17,518.15 A8.9,8.9 0 0 1 764.89,518.00 L764.85,521.60 A5.3,5.3 0 0 0 763.83,521.69 Z" fill="hsl(45,100%,50%)"/></g>

</g>

<!-- bottom center icon -->
<g id="bottomicon">
  
  <circle cx="399.9" cy="561" r="6.2" fill="#b2b2b2"/>
  <circle cx="399.9" cy="561" r="4.3" fill="#ececec"/>
  <circle cx="399.9" cy="561" r="3" fill="#727272"/>
  <rect x="393.4" y="560.3" width="13" height="1.4" fill="#7c7c7c"/>

</g>
</svg>
</body>
</html>
